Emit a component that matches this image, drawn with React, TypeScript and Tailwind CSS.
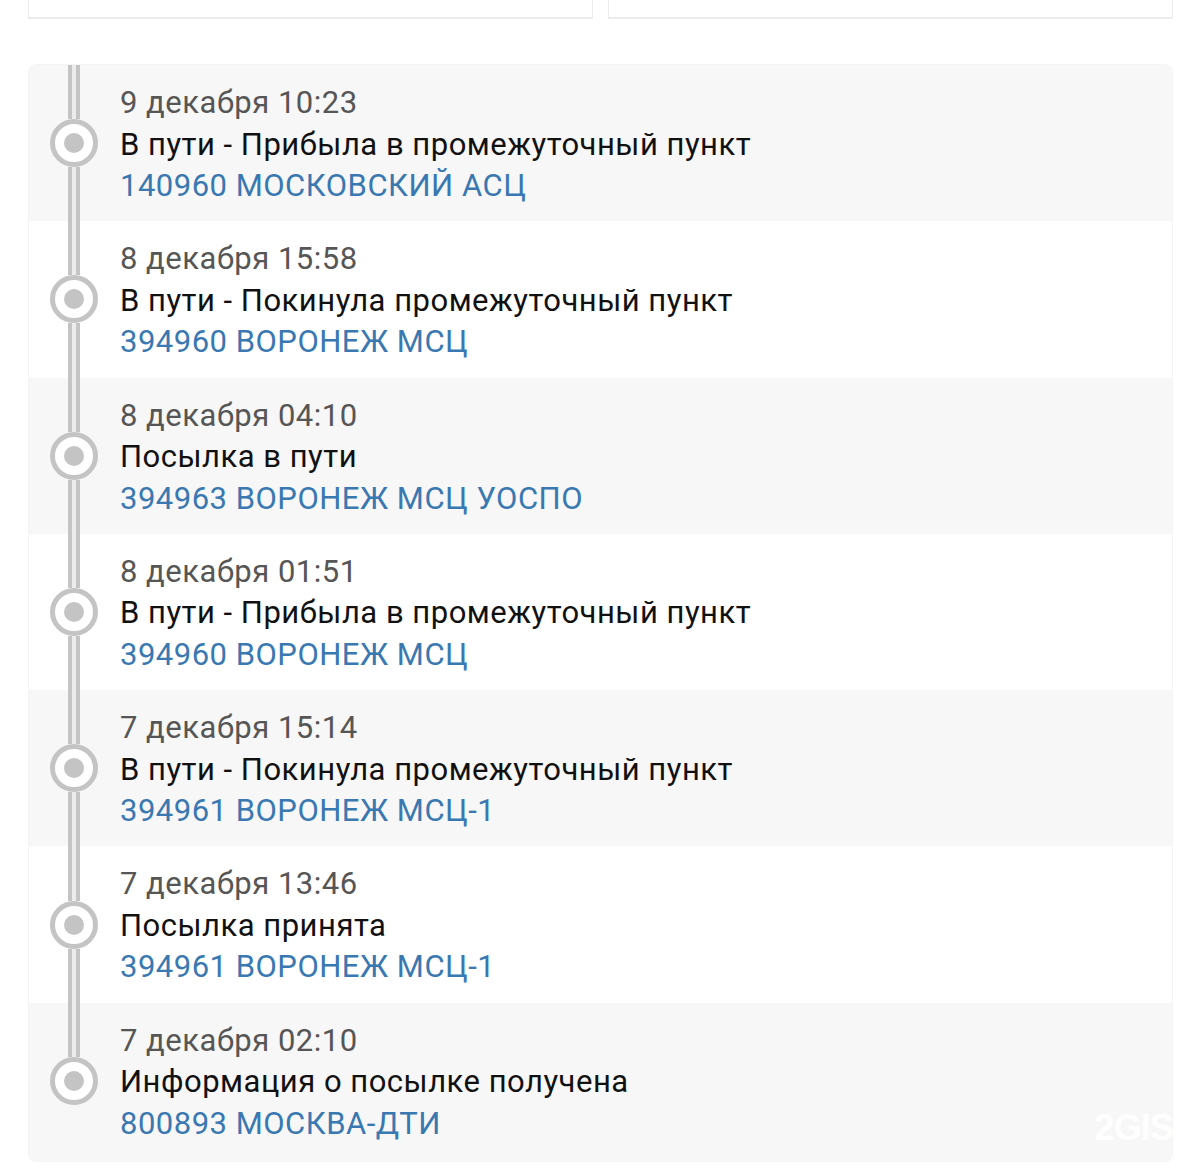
import React from 'react';

interface TrackEvent {
  date: string;
  status: string;
  place: string;
}

const EVENTS: TrackEvent[] = [
  { date: '9 декабря 10:23', status: 'В пути - Прибыла в промежуточный пункт', place: '140960 МОСКОВСКИЙ АСЦ' },
  { date: '8 декабря 15:58', status: 'В пути - Покинула промежуточный пункт', place: '394960 ВОРОНЕЖ МСЦ' },
  { date: '8 декабря 04:10', status: 'Посылка в пути', place: '394963 ВОРОНЕЖ МСЦ УОСПО' },
  { date: '8 декабря 01:51', status: 'В пути - Прибыла в промежуточный пункт', place: '394960 ВОРОНЕЖ МСЦ' },
  { date: '7 декабря 15:14', status: 'В пути - Покинула промежуточный пункт', place: '394961 ВОРОНЕЖ МСЦ-1' },
  { date: '7 декабря 13:46', status: 'Посылка принята', place: '394961 ВОРОНЕЖ МСЦ-1' },
  { date: '7 декабря 02:10', status: 'Информация о посылке получена', place: '800893 МОСКВА-ДТИ' },
];

const Segment = ({ hidden }: { hidden?: boolean }) => (
  <div
    className={`w-[12px] flex-1 ${hidden ? '' : 'border-x-4 border-[#c4c4c4] bg-[#ececec]'}`}
  />
);

const Row = ({ ev, index, last }: { ev: TrackEvent; index: number; last: boolean }) => (
  <div className={`flex ${last ? 'h-[158px]' : 'h-[156.3px]'} ${index % 2 === 0 ? 'bg-[#f7f7f7]' : 'bg-white'}`}>
    <div className="w-[91px] shrink-0 pl-[21px]">
      <div className={`w-[48px] flex flex-col items-center ${last ? 'h-[156px]' : 'h-full'}`}>
        <Segment />
        <div className="w-[48px] h-[48px] shrink-0 rounded-full border-[5px] border-[#c4c4c4] bg-white flex items-center justify-center">
          <div className="w-[20px] h-[20px] rounded-full bg-[#c4c4c4]" />
        </div>
        <Segment hidden={last} />
      </div>
    </div>
    <div className="pt-[17px] text-[31px] leading-[41.5px] tracking-[0.5px] font-['Roboto',sans-serif]">
      <div className="text-[#565656]">{ev.date}</div>
      <div className="text-[#111111]">{ev.status}</div>
      <div className="text-[#3a78b1]">{ev.place}</div>
    </div>
  </div>
);

export default function App() {
  return (
    <div className="w-[1200px] h-[1175px] bg-white overflow-hidden relative">
      <div className="flex gap-[15px] pl-[28px] pr-[27px]">
        <div className="flex-1 h-[19px] bg-white border-x border-b-2 border-[#ececec]" />
        <div className="flex-1 h-[19px] bg-white border-x border-b-2 border-[#ececec]" />
      </div>
      <div className="ml-[28px] mr-[27px] mt-[45px] rounded-lg overflow-hidden border border-[#f4f4f4]">
        {EVENTS.map((ev, i) => (
          <Row key={i} ev={ev} index={i} last={i === EVENTS.length - 1} />
        ))}
      </div>
      <div className="absolute right-[27px] bottom-[29px] text-white/90 font-['Liberation_Sans',sans-serif] font-bold text-[36px] leading-none tracking-tight">
        2GIS
      </div>
    </div>
  );
}
